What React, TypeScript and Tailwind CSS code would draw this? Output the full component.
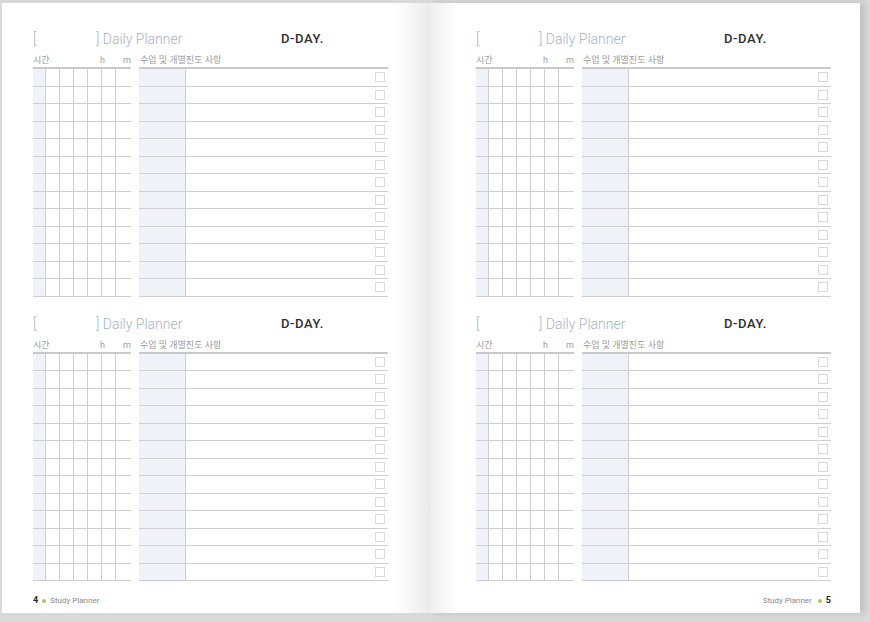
import React from 'react';

const ROWS = Array.from({ length: 13 }, (_, i) => i);
const COLS = Array.from({ length: 7 }, (_, i) => i);

const FONT = "font-['Roboto','Noto_Sans_CJK_KR',sans-serif]";

// 플래너 한 블록 (헤더 + 시간표 + 수업 목록)
const PlannerBlock: React.FC = () => {
  return (
    <div className="flex flex-col w-[355px]">
      {/* 제목 줄 */}
      <div className="flex items-center h-[18px]">
        <div className="flex w-[248px] text-[14px] leading-[18px] font-light text-[#a7b2c6]">
          <span className="w-[63px]">[</span>
          <span>] Daily Planner</span>
        </div>
        <span className="text-[13px] font-medium tracking-[0.6px] text-[#2f2f2f]">D-DAY.</span>
      </div>

      {/* 라벨 줄 */}
      <div className="flex mt-[7px] h-[11px] text-[9px] leading-[11px] text-[#9a9a9a]">
        <div className="flex w-[98px]">
          <span className="w-[67px]">시간</span>
          <span className="w-[23px]">h</span>
          <span>m</span>
        </div>
        <span className="ml-[9px]">수업 및 개별진도 사항</span>
      </div>

      {/* 표 */}
      <div className="flex gap-[8px] mt-[1px]">
        <div className="w-[98px] border-t-2 border-[#c9c9c9]">
          {ROWS.map((r) => (
            <div key={r} className="flex h-[17.5px] border-b border-[#cfcfcf]">
              {COLS.map((c) => (
                <div
                  key={c}
                  className={
                    c === 0
                      ? 'w-[13px] bg-[#eff2f8] border-r border-[#cfcfcf]'
                      : c === 6
                      ? 'flex-1'
                      : 'w-[14px] border-r border-[#cfcfcf]'
                  }
                />
              ))}
            </div>
          ))}
        </div>
        <div className="flex-1 border-t-2 border-[#c9c9c9]">
          {ROWS.map((r) => (
            <div key={r} className="flex h-[17.5px] border-b border-[#cfcfcf]">
              <div className="w-[47px] bg-[#eff2f8] border-r border-[#cfcfcf]" />
              <div className="flex-1 flex items-center justify-end pr-[3px]">
                <div className="w-[10px] h-[10px] border border-[#dadada]" />
              </div>
            </div>
          ))}
        </div>
      </div>
    </div>
  );
};

const Footer: React.FC<{ page: number; side: 'left' | 'right' }> = ({ page, side }) => (
  <div className={`flex items-center gap-[4px] text-[8px] text-[#8a8a8a] ${side === 'right' ? 'justify-end' : ''}`}>
    {side === 'left' && <span className="font-bold text-[9px] text-[#222]">{page}</span>}
    {side === 'left' && <span className="w-[4px] h-[4px] rounded-full bg-[#a6c95a]" />}
    <span>Study Planner</span>
    {side === 'right' && <span className="w-[4px] h-[4px] rounded-full bg-[#a6c95a] ml-[2px]" />}
    {side === 'right' && <span className="font-bold text-[9px] text-[#222]">{page}</span>}
  </div>
);

export default function App() {
  return (
    <div className={`w-[870px] h-[622px] bg-[#d9d9d9] overflow-hidden ${FONT}`}>
      <div className="flex h-[613px] pt-[3px] pl-[2px]">
        {/* 왼쪽 페이지 */}
        <div className="w-[428px] h-full bg-gradient-to-r from-white from-[92%] to-[#ebebeb] pl-[31px] pt-[27px] flex flex-col">
          <PlannerBlock />
          <div className="mt-[18px]">
            <PlannerBlock />
          </div>
          <div className="mt-[13px] w-[355px]">
            <Footer page={4} side="left" />
          </div>
        </div>

        {/* 오른쪽 페이지 */}
        <div className="w-[430px] h-full bg-gradient-to-r from-[#eeeeee] via-white via-[6%] to-white pl-[46px] pt-[27px] flex flex-col shadow-[4px_0_6px_rgba(0,0,0,0.12)]">
          <PlannerBlock />
          <div className="mt-[18px]">
            <PlannerBlock />
          </div>
          <div className="mt-[13px] w-[355px]">
            <Footer page={5} side="right" />
          </div>
        </div>
      </div>
    </div>
  );
}
